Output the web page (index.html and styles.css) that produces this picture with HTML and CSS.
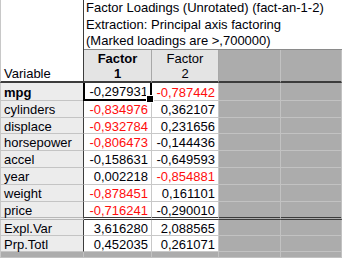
FILE: index.html
```html
<!DOCTYPE html>
<html lang="en">
<head>
  <meta charset="UTF-8">
  <title>Factor Loadings</title>
  <link rel="stylesheet" href="styles.css">
</head>
<body>
  <div class="sheet">
    <div class="corner">Variable</div>
    <div class="title">
      Factor Loadings (Unrotated) (fact-an-1-2)<br>
      Extraction: Principal axis factoring<br>
      (Marked loadings are &gt;,700000)
    </div>

    <div class="colhead bold">Factor<br>1</div>
    <div class="colhead">Factor<br>2</div>
    <div class="colhead empty"></div>
    <div class="colhead empty"></div>

    <div class="rowhead bold">mpg</div>
    <div class="cell selected">-0,297931</div>
    <div class="cell red">-0,787442</div>
    <div class="cell empty"></div><div class="cell empty"></div>

    <div class="rowhead">cylinders</div>
    <div class="cell red">-0,834976</div>
    <div class="cell">0,362107</div>
    <div class="cell empty"></div><div class="cell empty"></div>

    <div class="rowhead">displace</div>
    <div class="cell red">-0,932784</div>
    <div class="cell">0,231656</div>
    <div class="cell empty"></div><div class="cell empty"></div>

    <div class="rowhead">horsepower</div>
    <div class="cell red">-0,806473</div>
    <div class="cell">-0,144436</div>
    <div class="cell empty"></div><div class="cell empty"></div>

    <div class="rowhead">accel</div>
    <div class="cell">-0,158631</div>
    <div class="cell">-0,649593</div>
    <div class="cell empty"></div><div class="cell empty"></div>

    <div class="rowhead">year</div>
    <div class="cell">0,002218</div>
    <div class="cell red">-0,854881</div>
    <div class="cell empty"></div><div class="cell empty"></div>

    <div class="rowhead">weight</div>
    <div class="cell red">-0,878451</div>
    <div class="cell">0,161101</div>
    <div class="cell empty"></div><div class="cell empty"></div>

    <div class="rowhead split">price</div>
    <div class="cell red split">-0,716241</div>
    <div class="cell split">-0,290010</div>
    <div class="cell empty split"></div><div class="cell empty split"></div>

    <div class="rowhead">Expl.Var</div>
    <div class="cell">3,616280</div>
    <div class="cell">2,088565</div>
    <div class="cell empty"></div><div class="cell empty"></div>

    <div class="rowhead">Prp.Totl</div>
    <div class="cell">0,452035</div>
    <div class="cell">0,261071</div>
    <div class="cell empty"></div><div class="cell empty"></div>

    <div class="rowhead empty"></div>
    <div class="cell empty"></div>
    <div class="cell empty"></div>
    <div class="cell empty"></div><div class="cell empty"></div>
  </div>
</body>
</html>
```

FILE: styles.css
```css
* {
  margin: 0;
  padding: 0;
  box-sizing: border-box;
}

body {
  background-color: #acacac;
  font-family: 'Liberation Sans', Arial, sans-serif;
  font-size: 13px;
  color: #000008;
  overflow: hidden;
}

.sheet {
  width: 342px;
  height: 258px;
  display: grid;
  grid-template-columns: 84px 68px 67px 62px 61px;
  grid-template-rows: 50px 33px 18px 17px 16px 17px 17px 17px 17px 18px 16px 16px 1fr;
}

.corner {
  grid-row: 1 / span 2;
  background-color: #fff;
  border-left: 1px solid #c8c8c8;
  border-right: 1px solid #3c3c3c;
  border-bottom: 2px solid #3c3c3c;
  display: flex;
  align-items: flex-end;
  padding: 0 0 0 3px;
}

.title {
  grid-column: 2 / span 4;
  background-color: #fff;
  border-bottom: 1px solid #8a8a8a;
  padding-left: 2px;
  line-height: 16.5px;
  white-space: nowrap;
}

.colhead {
  background-color: #e4e4e4;
  border-right: 1px solid #a8a8a8;
  border-bottom: 2px solid #3c3c3c;
  display: flex;
  align-items: center;
  justify-content: center;
  text-align: center;
  line-height: 15px;
}

.rowhead {
  background-color: #ececec;
  border-left: 1px solid #c8c8c8;
  border-right: 1px solid #3c3c3c;
  border-bottom: 1px solid #c4c4c4;
  display: flex;
  align-items: center;
  padding: 1px 0 0 3px;
}

.cell {
  background-color: #fff;
  border-right: 1px solid #c8c8c8;
  border-bottom: 1px solid #c8c8c8;
  display: flex;
  align-items: center;
  justify-content: flex-end;
  padding: 1px 3px 0 0;
}

.bold {
  font-weight: bold;
}

.red {
  color: #ff0d0d;
}

.empty,
.colhead.empty,
.rowhead.empty {
  background-color: #acacac;
  border-right-color: #c2c2c2;
  border-bottom-color: #c2c2c2;
}

.colhead.empty {
  border-bottom-color: #3c3c3c;
}

.split {
  border-bottom: 3px double #3c3c3c;
}

.rowhead.split {
  border-bottom-color: #b8b8b8;
}

.selected {
  position: relative;
  border: 2px solid #000;
  border-top: 0;
  margin-left: -1px;
  padding-right: 2px;
}

.selected::after {
  content: "";
  position: absolute;
  right: -4px;
  bottom: -4px;
  width: 6px;
  height: 6px;
  background-color: #000;
  border: 1px solid #fff;
  z-index: 1;
}
```
